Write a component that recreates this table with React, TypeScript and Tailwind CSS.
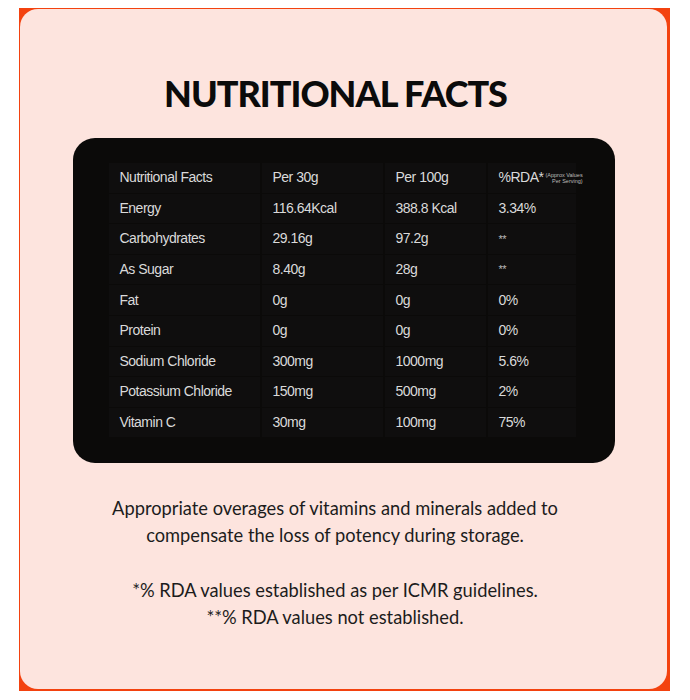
const rows = [
  ['Energy', '116.64Kcal', '388.8 Kcal', '3.34%'],
  ['Carbohydrates', '29.16g', '97.2g', '**'],
  ['As Sugar', '8.40g', '28g', '**'],
  ['Fat', '0g', '0g', '0%'],
  ['Protein', '0g', '0g', '0%'],
  ['Sodium Chloride', '300mg', '1000mg', '5.6%'],
  ['Potassium Chloride', '150mg', '500mg', '2%'],
  ['Vitamin C', '30mg', '100mg', '75%'],
];

const cellFont = { fontFamily: '"Liberation Sans", Arial, sans-serif' };

function Cell({ children, small }: { children: React.ReactNode; small?: boolean }) {
  return (
    <div className="flex h-[29.6px] items-center bg-[#0f0e0e] px-[11px] text-[14px] tracking-[-0.5px] text-[#dadada]">
      <span className={small ? 'text-[11px] text-[#bbb]' : ''}>{children}</span>
    </div>
  );
}

export default function App() {
  return (
    <div className="h-[700px] w-[690px] bg-white pl-[19px] pt-[8px]">
      <div className="h-[683px] w-[651px] bg-[#f3420f] pb-[2px] pl-[1px] pr-[3px] pt-[1px]">
        <div
          className="flex h-full flex-col items-center rounded-[18px] bg-[#fde4de]"
          style={{ fontFamily: 'Lato, "Noto Sans", sans-serif' }}
        >
          <h1 className="mr-[16px] mt-[66px] text-[36px] font-black leading-none tracking-[-1px] text-[#0b0b0b]">
            NUTRITIONAL FACTS
          </h1>

          <div className="mt-[27px] h-[325px] w-[542px] rounded-[22px] bg-[#0b0a09] pl-[36px] pt-[25px]">
            <div
              className="grid grid-cols-[151px_121px_101px_88px] gap-x-[2px] gap-y-[1px]"
              style={cellFont}
            >
              <Cell>Nutritional Facts</Cell>
              <Cell>Per 30g</Cell>
              <Cell>Per 100g</Cell>
              <div className="flex h-[29.6px] items-center bg-[#0f0e0e] px-[11px] text-[14px] tracking-[-0.5px] text-[#dadada]">
                <span>%RDA*</span>
                <span className="ml-[2px] flex flex-col text-right text-[5.5px] leading-[6px] tracking-normal text-[#bdbdbd]">
                  <span className="whitespace-nowrap">(Approx Values</span>
                  <span className="whitespace-nowrap">Per Serving)</span>
                </span>
              </div>
              {rows.map((r) =>
                r.map((c, i) => (
                  <Cell key={r[0] + i} small={c === '**'}>
                    {c}
                  </Cell>
                ))
              )}
            </div>
          </div>

          <div className="mr-[17px] mt-[32px] text-center text-[18.3px] leading-[27px] text-[#1c1c1c]">
            <p>Appropriate overages of vitamins and minerals added to</p>
            <p>compensate the loss of potency during storage.</p>
            <p className="mt-[28px]">*% RDA values established as per ICMR guidelines.</p>
            <p>**% RDA values not established.</p>
          </div>
        </div>
      </div>
    </div>
  );
}
